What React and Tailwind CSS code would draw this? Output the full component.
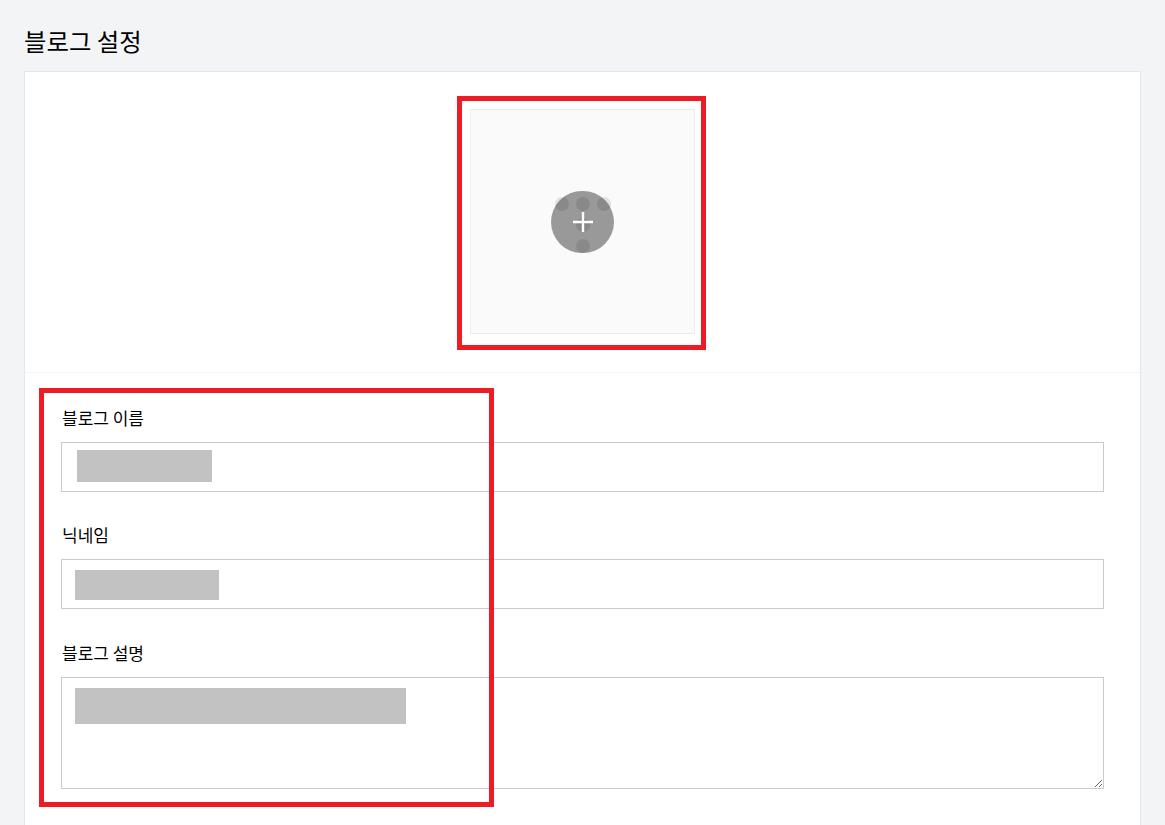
const font = { fontFamily: '"Noto Sans CJK KR", "Noto Sans", sans-serif' };

const Dot = () => <span className="w-[14px] h-[14px] rounded-full bg-black/10"></span>;

const Redaction = ({ className }) => <div className={`absolute bg-[#c2c2c2] ${className}`}></div>;

const Field = ({ label, children }) => (
  <div>
    <label className="block text-[17px] leading-[22px] text-black pl-px mb-[13px]">{label}</label>
    <div className="relative">{children}</div>
  </div>
);

const App = () => {
  return (
    <div style={font} className="relative h-[825px] overflow-hidden bg-[#f3f4f6] px-6 pt-[24px]">
      <h1 className="text-[24.4px] leading-[34px] text-black font-normal mb-[13px]">블로그 설정</h1>

      <div className="bg-white border border-[#e3e6ec] h-[800px]">
        {/* Image upload */}
        <div className="h-[301px] border-b border-[#f3f4f6] flex justify-center pt-[37px]">
          <div className="relative w-[225px] h-[225px] bg-[#fafafa] border border-[#ececec] flex items-center justify-center">
            <div className="w-[63px] h-[62px] mt-px rounded-full bg-[#999999] flex items-center justify-center">
              <svg width="22" height="22" viewBox="0 0 22 22" fill="none" stroke="white" strokeWidth="2.4" className="relative z-10">
                <path d="M11 1v20M1 11h20" />
              </svg>
            </div>
            {/* dots peeking through the button */}
            <div className="absolute inset-0 pt-[87px] flex flex-col items-center gap-[7px]">
              <div className="w-[56px] flex justify-between">
                <Dot />
                <Dot />
                <Dot />
              </div>
              <Dot />
              <Dot />
            </div>
          </div>
        </div>

        {/* Form */}
        <div className="px-9 pt-[34px] flex flex-col gap-[32.4px]">
          <Field label="블로그 이름">
            <input type="text" className="w-full h-[50px] border border-[#c5cad5] bg-white px-3 outline-none" />
            <Redaction className="left-[16px] top-[8px] w-[135px] h-[32px]" />
          </Field>
          <Field label="닉네임">
            <input type="text" className="w-full h-[50px] border border-[#c5cad5] bg-white px-3 outline-none" />
            <Redaction className="left-[14px] top-[11px] w-[144px] h-[30px]" />
          </Field>
          <Field label="블로그 설명">
            <textarea className="block w-full h-[112px] border border-[#c5cad5] bg-white px-3 py-2 outline-none"></textarea>
            <Redaction className="left-[14px] top-[11px] w-[331px] h-[36px]" />
          </Field>
        </div>
      </div>

      {/* Red annotation boxes */}
      <div className="absolute left-[457px] top-[96px] w-[249px] h-[254px] border-[5px] border-[#ed1c24]"></div>
      <div className="absolute left-[39px] top-[388px] w-[455px] h-[419px] border-[5px] border-[#ed1c24]"></div>
    </div>
  );
};

export default App;
